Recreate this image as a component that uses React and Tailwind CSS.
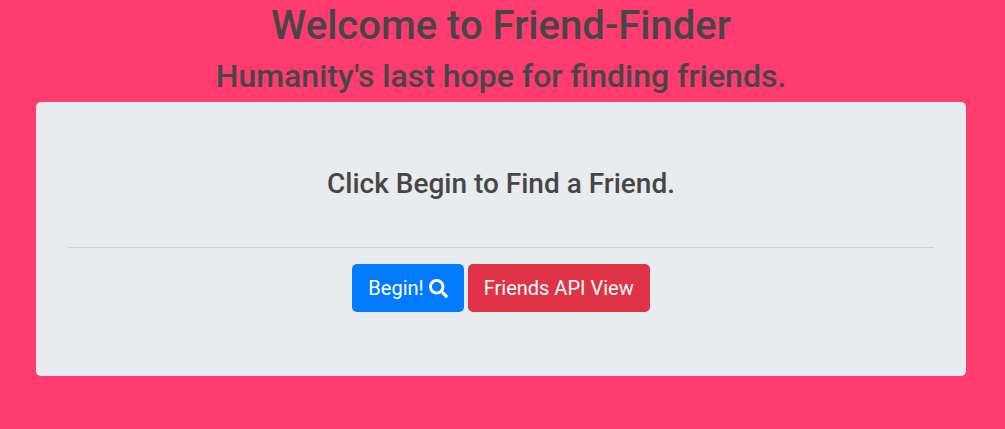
import { FaSearch } from "react-icons/fa";

export default function App() {
  return (
    <div className="min-h-screen bg-[#ff3b70] pr-[39px] pb-12 pl-9 font-[Roboto,sans-serif] text-[#464646]">
      <header className="text-center font-medium">
        <h1 className="pt-0.5 text-[40px] leading-12">Welcome to Friend-Finder</h1>
        <h2 className="pt-1.5 text-[32px] leading-10">Humanity's last hope for finding friends.</h2>
      </header>
      <main className="mt-1.5 rounded-[5px] bg-[#e9ecef] px-8 py-16 text-center">
        <h3 className="text-[28px] leading-9 font-medium">Click Begin to Find a Friend.</h3>
        <hr className="mt-[45px] mb-4 border-[#cfd2d5]" />
        <div className="flex justify-center gap-1 text-xl text-white">
          <button className="flex h-12 items-center gap-[5px] rounded-[5px] bg-[#007bff] px-4">
            Begin! <FaSearch className="size-[19px]" aria-hidden="true" />
          </button>
          <button className="h-12 rounded-[5px] bg-[#e03348] px-4">Friends API View</button>
        </div>
      </main>
    </div>
  );
}
